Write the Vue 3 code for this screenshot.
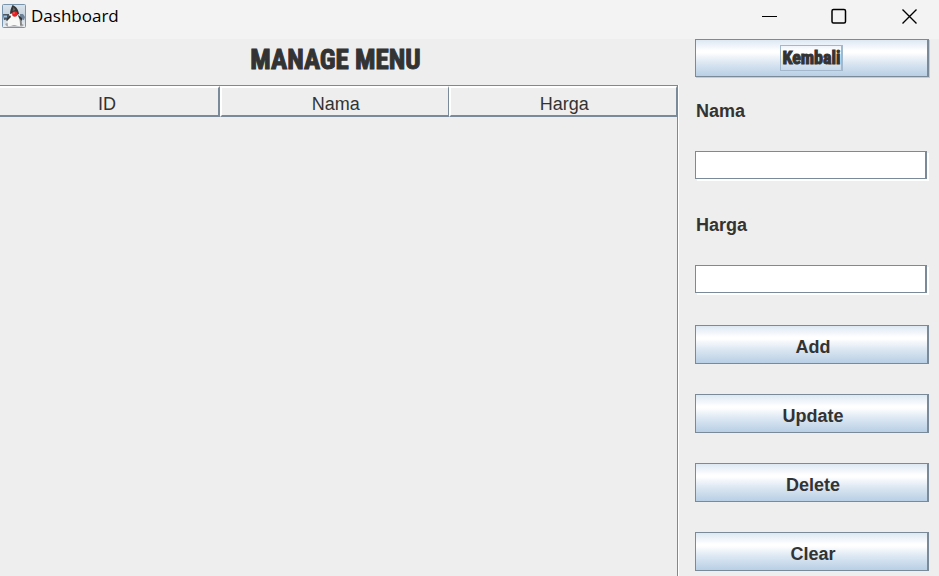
<script setup>
import { ref } from 'vue'

const columns = ['ID', 'Nama', 'Harga']
const rows = ref([])
const nama = ref('')
const harga = ref('')
const selected = ref(-1)

function clear() {
  nama.value = ''
  harga.value = ''
  selected.value = -1
}
function add() {
  rows.value.push({ id: rows.value.length + 1, nama: nama.value, harga: harga.value })
  clear()
}
function update() {
  const row = rows.value[selected.value]
  if (row) Object.assign(row, { nama: nama.value, harga: harga.value })
}
function remove() {
  if (selected.value >= 0) rows.value.splice(selected.value, 1)
  clear()
}
function select(index) {
  selected.value = index
  nama.value = rows.value[index].nama
  harga.value = rows.value[index].harga
}
const actions = [
  { label: 'Add', run: add },
  { label: 'Update', run: update },
  { label: 'Delete', run: remove },
  { label: 'Clear', run: clear },
]
</script>

<template>
  <div class="window">
    <header class="titlebar">
      <svg class="app-icon" viewBox="0 0 24 24" aria-hidden="true">
        <defs>
          <linearGradient id="tile" x1="0" y1="0" x2="0" y2="1">
            <stop offset="0" stop-color="#dbe4ec" />
            <stop offset="0.5" stop-color="#c3d0dc" />
            <stop offset="1" stop-color="#eceff2" />
          </linearGradient>
        </defs>
        <rect x="0.5" y="0.5" width="23" height="23" rx="1" fill="url(#tile)" stroke="#7895ad" />
        <path d="M1 10h6v5l-5 1z" fill="#4b5660" />
        <path d="M2 11.500h3v2H2z" fill="#9fc3e0" />
        <path d="M18 10l3 0 2 3-1 3-4-1z" fill="#6d8296" />
        <path d="M3 20c4-2 14-2 19 1l-2 1.500H5z" fill="#a0a4a8" />
        <path d="M8 10C6 14 5 18 6 22c2 1 4-1 6-1 3 0 4 2 7 1 1-4-1-9-3-13z" fill="#f8f8f6" />
        <path d="M16 11c2 4 2 8 2 11l2-1c0-5-1-8-4-10z" fill="#858585" />
        <path d="M8 11l-4 5 1 1 4-4zM16 11l4 3 0 3-3-3z" fill="#343434" />
        <path d="M10.500 1c3 1 6 4 6.500 9l-2 1c-2-2-5-2-7-1 0-3 1-6 2.500-9z" fill="#353535" />
        <path d="M11.500 3l2 3-3 1z" fill="#686868" />
        <circle cx="12.800" cy="10" r="2.700" fill="#e32226" />
        <circle cx="12" cy="9" r="0.900" fill="#ff5b50" />
      </svg>
      <span class="caption">Dashboard</span>
      <div class="controls">
        <button type="button" aria-label="Minimize">
          <svg viewBox="0 0 16 16"><path d="M1 8.500h15" /></svg>
        </button>
        <button type="button" aria-label="Maximize">
          <svg viewBox="0 0 16 16"><rect x="1" y="1.500" width="13.500" height="13.500" rx="1.500" stroke-width="1.500" /></svg>
        </button>
        <button type="button" aria-label="Close">
          <svg viewBox="0 0 16 16"><path d="M1.500 1.500l14 14M15.500 1.500l-14 14" stroke-width="1.400" /></svg>
        </button>
      </div>
    </header>

    <main class="content">
      <section class="listing">
        <h1>MANAGE MENU</h1>
        <div class="scroll">
          <table>
            <thead>
              <tr><th v-for="column in columns" :key="column" scope="col">{{ column }}</th></tr>
            </thead>
            <tbody>
              <tr v-for="(row, index) in rows" :key="row.id" @click="select(index)">
                <td>{{ row.id }}</td>
                <td>{{ row.nama }}</td>
                <td>{{ row.harga }}</td>
              </tr>
            </tbody>
          </table>
        </div>
      </section>

      <form class="side" @submit.prevent>
        <button type="button" class="metal back"><span>Kembali</span></button>
        <div class="field">
          <label for="nama">Nama</label>
          <input id="nama" v-model="nama" type="text" />
        </div>
        <div class="field">
          <label for="harga">Harga</label>
          <input id="harga" v-model="harga" type="text" />
        </div>
        <div class="actions">
          <button v-for="action in actions" :key="action.label" type="button" class="metal" @click="action.run">
            {{ action.label }}
          </button>
        </div>
      </form>
    </main>
  </div>
</template>

<style>
body {
  margin: 0;
  background: #eeeeee;
}
</style>

<style scoped>
.window {
  display: flex;
  flex-direction: column;
  height: 100vh;
  overflow: hidden;
  background: #eeeeee;
  color: #333333;
  font-family: "Liberation Sans", Arial, sans-serif;
  font-size: 18px;
}
.titlebar {
  display: flex;
  align-items: center;
  flex: none;
  height: 39px;
  padding: 0 0 7px 2px;
  box-sizing: border-box;
  background: #f3f3f3;
}
.app-icon {
  width: 24px;
  height: 24px;
}
.caption {
  margin-left: 5px;
  color: #000000;
  font-family: "Open Sans", "Noto Sans", sans-serif;
  font-size: 17px;
  line-height: 32px;
}
.controls {
  display: flex;
  margin: 0 -5px 0 auto;
}
.controls button {
  display: flex;
  align-items: center;
  justify-content: center;
  width: 70px;
  height: 32px;
  padding: 0;
  border: 0;
  background: none;
}
.controls svg {
  width: 16px;
  height: 16px;
  fill: none;
  stroke: #000000;
}
.content {
  display: flex;
  flex: 1;
  min-height: 0;
}
.listing {
  display: flex;
  flex-direction: column;
  flex: 1;
  min-width: 0;
}
h1 {
  margin: 0;
  padding: 0 8px 4px 0;
  font-family: Impact, "Roboto Condensed", "Open Sans Condensed", "Liberation Sans", sans-serif;
  font-size: 27px;
  font-weight: 700;
  line-height: 42px;
  text-align: center;
  -webkit-text-stroke: 1px #333333;
}
.scroll {
  flex: 1;
  margin-right: 1px;
  border-top: 1px solid #7a8a99;
  border-right: 1px solid #7a8a99;
  box-shadow: 1px 0 0 #ffffff;
}
table {
  width: 100%;
  table-layout: fixed;
  border-collapse: separate;
  border-spacing: 0;
}
th {
  height: 31px;
  box-sizing: border-box;
  padding: 4px 0 0 2px;
  border-top: 2px solid #ffffff;
  border-left: 2px solid #ffffff;
  border-right: 1px solid #7a8a99;
  border-bottom: 2px solid #7a8a99;
  font-weight: 400;
  line-height: 20px;
}
th:first-child {
  width: 220px;
  padding: 4px 4px 0 0;
  border-left: 0;
  border-right-width: 2px;
}
td {
  padding: 2px 4px;
}
.side {
  display: flex;
  flex-direction: column;
  flex: none;
  width: 234px;
  padding: 0 10px 0 16px;
}
.metal {
  width: 100%;
  height: 39px;
  flex: none;
  padding: 4px 0 0 3px;
  border: 1px solid #7a8a99;
  border-right-width: 2px;
  background: linear-gradient(#dde8f3 0%, #ffffff 30%, #ffffff 35%, #dde8f3 62%, #b8cfe5 100%);
  color: #333333;
  font-family: inherit;
  font-size: 18px;
  font-weight: 700;
  line-height: 20px;
}
.back {
  height: 38px;
  padding: 0;
  box-shadow: 1px 1px 0 #b8cfe5;
  font-family: Impact, "Roboto Condensed", "Open Sans Condensed", "Liberation Sans", sans-serif;
}
.back span {
  display: inline-block;
  padding: 2px 0 2px 1px;
  border: 1px solid #a3b8cc;
  border-right-width: 2px;
  -webkit-text-stroke: 1px #333333;
}
.field {
  display: flex;
  flex-direction: column;
  gap: 30px;
  margin-top: 24px;
}
.field + .field {
  margin-top: 34px;
}
label {
  padding-left: 1px;
  font-weight: 700;
  line-height: 20px;
}
input {
  height: 28px;
  box-sizing: border-box;
  margin: 0 2px 2px 0;
  padding: 0 3px;
  border: 1px solid #7a8a99;
  border-right-width: 2px;
  border-radius: 0;
  outline: 0;
  background: #ffffff;
  box-shadow: 2px 2px 0 #ffffff;
  font: inherit;
}
.actions {
  display: flex;
  flex-direction: column;
  gap: 30px;
  margin-top: 30px;
}
</style>
